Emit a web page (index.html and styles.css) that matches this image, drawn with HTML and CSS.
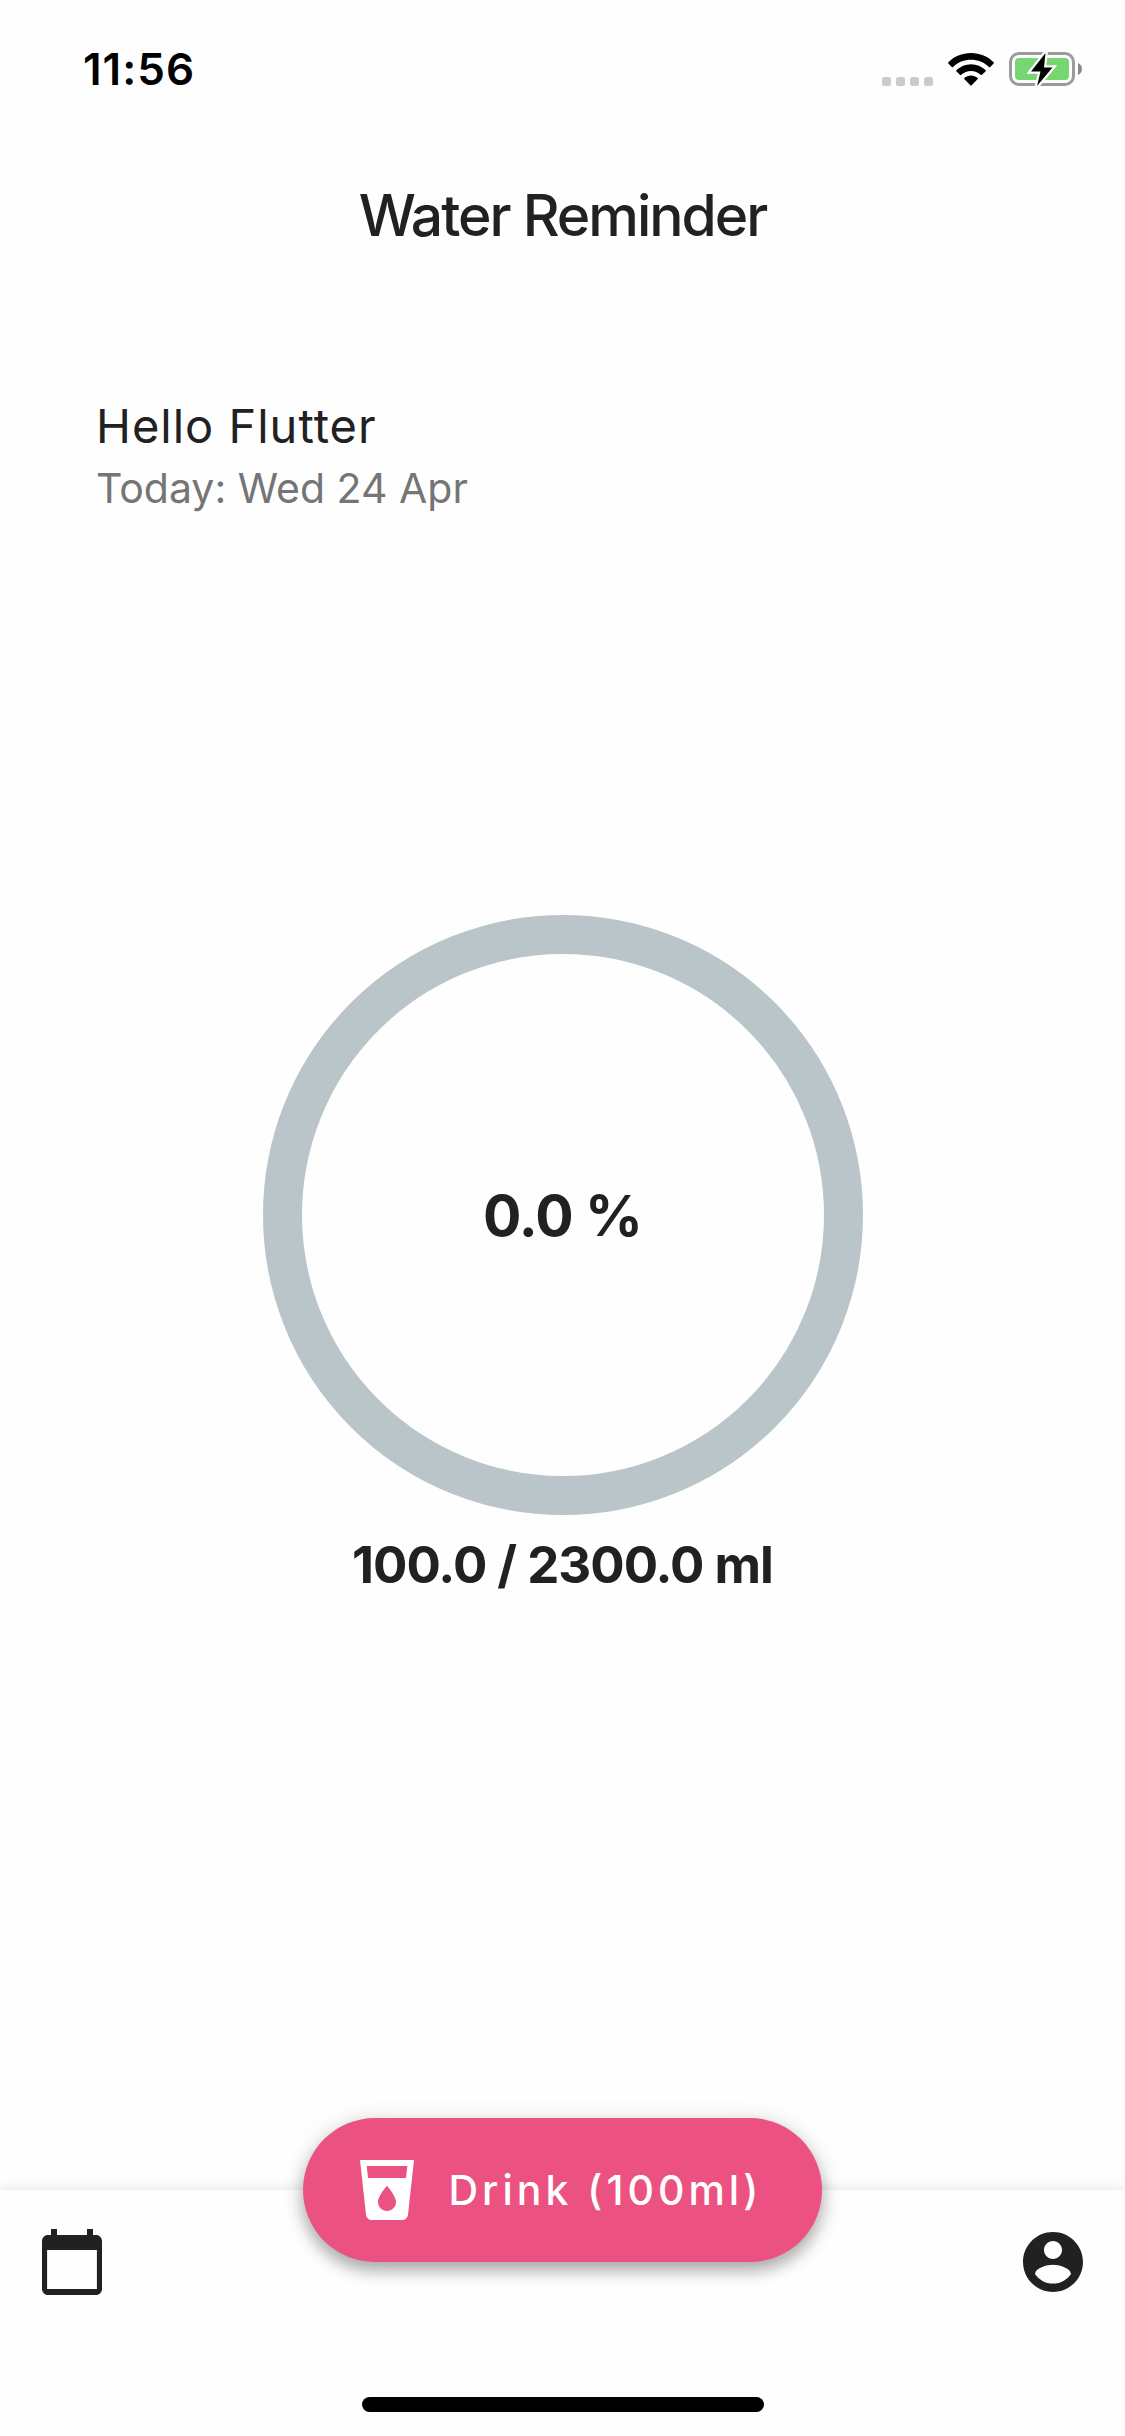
FILE: index.html
```html
<!DOCTYPE html>
<html lang="en">
<head>
<meta charset="utf-8">
<meta name="viewport" content="width=device-width, initial-scale=1">
<title>Water Reminder</title>
<link rel="stylesheet" href="styles.css">
</head>
<body>
<div class="app">
  <div class="status">
    <time class="clock">11:56</time>
    <div class="indicators">
      <svg class="signal" width="51" height="33" viewBox="0 0 51 33" aria-hidden="true">
        <g fill="#cbcbcb">
          <rect x="0" y="24" width="9" height="9" rx="2.5"/>
          <rect x="14" y="24" width="9" height="9" rx="2.5"/>
          <rect x="28" y="24" width="9" height="9" rx="2.5"/>
          <rect x="42" y="24" width="9" height="9" rx="2.5"/>
        </g>
      </svg>
      <svg class="wifi" width="46" height="33" viewBox="0 0 46 33" aria-hidden="true">
        <path d="M23 0C32 0 40 3.500 45.600 9.200q.6.700 0 1.400L42.300 14q-.7.700-1.400 0C36 9.300 29.800 6.800 23 6.800S10 9.300 5.100 14q-.7.700-1.400 0L.4 10.600q-.6-.7 0-1.400C6 3.500 14 0 23 0z"/>
        <path d="M23 11.200c5.600 0 10.700 2.200 14.500 5.800q.7.700 0 1.400l-3.400 3.400q-.7.600-1.400 0C30 19.400 26.700 18 23 18s-7 1.400-9.700 3.800q-.7.600-1.400 0l-3.400-3.400q-.7-.7 0-1.400c3.800-3.600 8.900-5.800 14.500-5.800z"/>
        <path d="M23 22.400c2.500 0 4.800.9 6.500 2.400q.7.700 0 1.400l-5.800 6.100q-.7.700-1.400 0l-5.800-6.100q-.7-.7 0-1.400c1.700-1.500 4-2.400 6.500-2.400z"/>
      </svg>
      <svg class="battery" width="73" height="34" viewBox="0 0 73 34" aria-hidden="true">
        <rect x="1.500" y="1.500" width="63" height="31" rx="8.500" fill="none" stroke="#9b9b9b" stroke-width="3"/>
        <rect x="6" y="6" width="54" height="22" rx="4" fill="#77d572"/>
        <path d="M69 11c2.700 1 4 3.400 4 6s-1.300 5-4 6z" fill="#8a8a8a"/>
        <path d="M36.500 1 22 19.500h9.500L28 34l15.500-18.500H35z" fill="#000" stroke="#fefefe" stroke-width="4.500" paint-order="stroke"/>
      </svg>
    </div>
  </div>

  <header class="app-bar">
    <h1 class="title">Water Reminder</h1>
  </header>

  <section class="greeting">
    <p class="hello">Hello Flutter</p>
    <p class="today">Today: Wed 24 Apr</p>
  </section>

  <main class="progress">
    <div class="ring"><span class="percent">0.0 %</span></div>
    <p class="amount">100.0 / 2300.0 ml</p>
  </main>

  <footer class="bottom-bar">
    <button class="icon-button" type="button" aria-label="History">
      <svg class="icon" viewBox="0 0 24 24" aria-hidden="true"><path d="M20 3h-1V1h-2v2H7V1H5v2H4c-1.100 0-2 .9-2 2v16c0 1.100.9 2 2 2h16c1.100 0 2-.9 2-2V5c0-1.100-.9-2-2-2zm.3 18H3.700V8h16.600v13z"/></svg>
    </button>
    <button class="icon-button" type="button" aria-label="Profile">
      <svg class="icon" viewBox="0 0 24 24" aria-hidden="true"><path d="M12 2C6.480 2 2 6.480 2 12s4.480 10 10 10 10-4.480 10-10S17.520 2 12 2zm0 3c1.660 0 3 1.340 3 3s-1.340 3-3 3-3-1.340-3-3 1.340-3 3-3zm0 14.200c-2.500 0-4.710-1.280-6-3.220.03-1.990 4-3.080 6-3.080 1.990 0 5.970 1.090 6 3.080-1.290 1.940-3.500 3.220-6 3.220z"/></svg>
    </button>
    <button class="drink" type="button">
      <svg class="icon" viewBox="0 0 24 24" aria-hidden="true"><path d="M3 2l2.010 18.230C5.130 21.230 5.970 22 7 22h10c1.030 0 1.870-.77 1.990-1.770L21 2H3zm9 17c-1.660 0-3-1.340-3-3 0-2 3-5.400 3-5.400s3 3.400 3 5.400c0 1.660-1.340 3-3 3zm6.330-11H5.670l-.44-4h13.550l-.45 4z"/></svg>
      <span class="drink-label">Drink (100ml)</span>
    </button>
    <div class="home-indicator"></div>
  </footer>
</div>
</body>
</html>
```

FILE: styles.css
```css
* {
  box-sizing: border-box;
}

body {
  margin: 0;
  background: #fefefe;
  color: #212121;
  font-family: Inter, "Liberation Sans", sans-serif;
}

h1,
p {
  margin: 0;
}

button {
  border: 0;
  padding: 0;
  color: inherit;
  background: none;
  font: inherit;
  cursor: pointer;
}

.app {
  display: flex;
  flex-direction: column;
  min-height: 100vh;
}

.status {
  display: flex;
  align-items: center;
  justify-content: space-between;
  height: 132px;
  padding: 6px 43px 0 83px;
  color: #000;
}

.clock {
  font-size: 44px;
  font-weight: 600;
  letter-spacing: 1px;
}

.indicators {
  display: flex;
  align-items: center;
  gap: 15px;
}

.wifi {
  fill: #000;
}

.app-bar {
  display: flex;
  align-items: center;
  justify-content: center;
  height: 168px;
}

.title {
  font-size: 57px;
  font-weight: 500;
  line-height: 72px;
  letter-spacing: -2px;
}

.greeting {
  padding: 96px 96px 0;
}

.hello {
  font-size: 47px;
  line-height: 60px;
  letter-spacing: 1px;
}

.today {
  color: #757575;
  font-size: 41px;
  line-height: 64px;
}

.progress {
  flex: 1;
  display: flex;
  flex-direction: column;
  align-items: center;
  justify-content: center;
  gap: 20px;
  padding-bottom: 200px;
}

.ring {
  display: flex;
  align-items: center;
  justify-content: center;
  width: 600px;
  height: 600px;
  border: 39px solid #bac5c9;
  border-radius: 50%;
}

.percent {
  font-size: 57px;
  font-weight: 700;
  letter-spacing: -1px;
}

.amount {
  font-size: 51px;
  font-weight: 700;
  line-height: 60px;
  letter-spacing: -1px;
}

.bottom-bar {
  position: relative;
  display: flex;
  align-items: flex-start;
  justify-content: space-between;
  height: 246px;
  padding: 36px;
  background: #fefefe;
  box-shadow: 0 0 12px rgba(0, 0, 0, 0.12);
}

.icon-button {
  height: 72px;
}

.icon {
  display: block;
  flex: none;
  width: 72px;
  height: 72px;
  fill: currentColor;
}

.drink {
  position: absolute;
  top: -72px;
  left: 50%;
  transform: translateX(-50%);
  display: flex;
  align-items: center;
  gap: 26px;
  height: 144px;
  padding: 0 60px 0 48px;
  border-radius: 72px;
  background: #ec5281;
  box-shadow: 0 9px 15px rgba(0, 0, 0, 0.26), 0 3px 24px rgba(0, 0, 0, 0.14);
  color: #fff;
  white-space: nowrap;
}

.drink-label {
  font-size: 41px;
  font-weight: 500;
  letter-spacing: 4px;
}

.home-indicator {
  position: absolute;
  bottom: 24px;
  left: 50%;
  width: 402px;
  height: 15px;
  transform: translateX(-50%);
  border-radius: 8px;
  background: #000;
}
```
